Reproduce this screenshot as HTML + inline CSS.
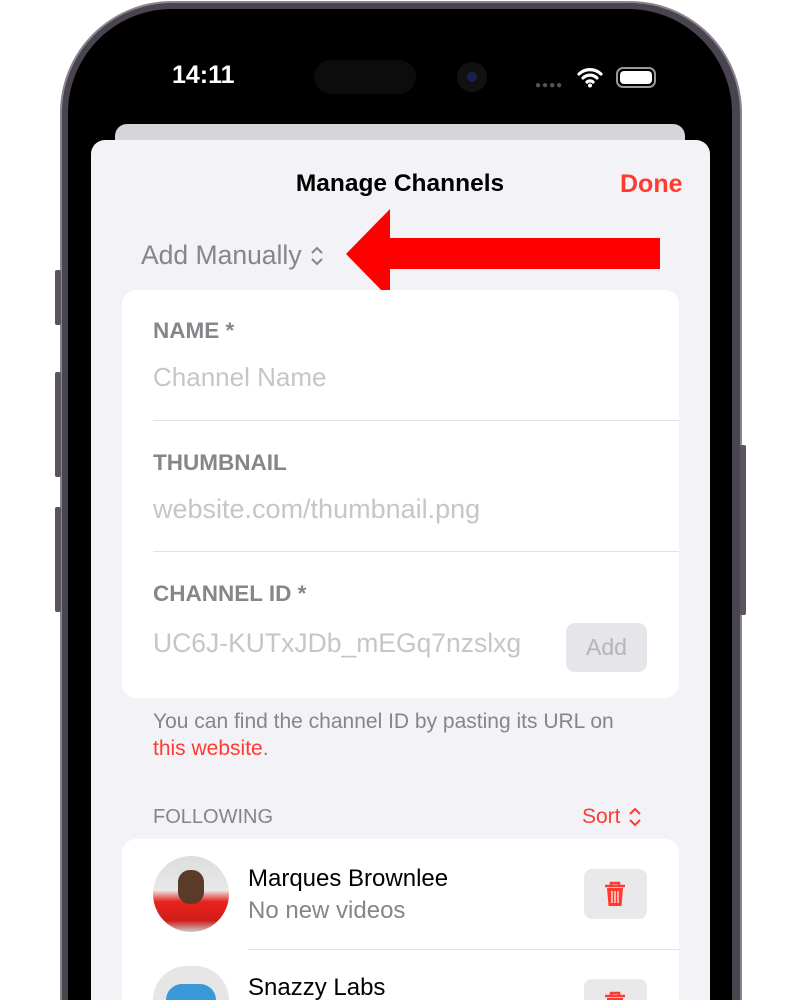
<!DOCTYPE html>
<html><head><meta charset="utf-8"><style>
*{margin:0;padding:0;box-sizing:border-box}
html,body{width:800px;height:1000px;overflow:hidden}
body{background:#fff;position:relative;font-family:"Liberation Sans",sans-serif}
.abs{position:absolute}
.frame{left:60px;top:1px;width:682px;height:999px;border-radius:112px 112px 0 0;background:#4a4450;border:2px solid #8a8390;border-bottom:none}
.screen{left:68px;top:9px;width:664px;height:991px;border-radius:104px 104px 0 0;background:#000}
.btn{background:#5a5360;width:6px;border-radius:2px}
.sheet{left:91px;top:140px;width:619px;height:860px;background:#f2f2f7;border-radius:14px 14px 0 0}
.back{left:115px;top:124px;width:570px;height:40px;background:#d5d5da;border-radius:12px}
.card{background:#fff;border-radius:14px}
.lbl{font-size:22.5px;color:#85858a;font-weight:bold}
.ph{color:#c6c6c9}
.sep{height:1px;background:#e2e2e6}
.clip{left:0;top:0;width:800px;height:1000px;overflow:hidden}
</style></head><body>
<div class="abs frame"></div>
<div class="abs btn" style="left:55px;top:270px;height:55px"></div>
<div class="abs btn" style="left:55px;top:372px;height:105px"></div>
<div class="abs btn" style="left:55px;top:507px;height:105px"></div>
<div class="abs btn" style="left:740px;top:445px;height:170px"></div>
<div class="abs screen"></div>
<div class="abs" style="left:172px;top:61px;color:#fff;font-size:25px;font-weight:bold">14:11</div>
<div class="abs" style="left:314px;top:60px;width:102px;height:34px;border-radius:17px;background:#0c0c0c"></div>
<div class="abs" style="left:457px;top:62px;width:30px;height:30px;border-radius:15px;background:#111"><div style="margin:10px;width:10px;height:10px;border-radius:5px;background:#1a2150"></div></div>
<div class="abs" style="left:535px;top:80px;color:#555;font-size:10px;letter-spacing:1px">●●●●</div>
<svg class="abs" style="left:577px;top:66px" width="26" height="22" viewBox="0 0 26 22"><path d="M2 8a16 16 0 0 1 22 0M6 12a10 10 0 0 1 14 0M10 16a4.5 4.5 0 0 1 6 0" stroke="#fff" stroke-width="3.2" fill="none" stroke-linecap="round"/><circle cx="13" cy="19.5" r="2" fill="#fff"/></svg>
<div class="abs" style="left:616px;top:67px;width:40px;height:21px;border:2px solid #999;border-radius:7px;padding:2px"><div style="width:100%;height:100%;background:#fff;border-radius:4px"></div></div>
<div class="abs back"></div>
<div class="abs sheet"></div>
<div class="abs" style="left:0;width:800px;top:170px;text-align:center;font-size:24.5px;font-weight:bold;color:#000">Manage Channels</div>
<div class="abs" style="left:620px;top:170px;font-size:25px;font-weight:bold;color:#ff3b30">Done</div>
<div class="abs" style="left:141px;top:240px;font-size:26.5px;color:#85858a">Add Manually</div>
<svg class="abs" style="left:309px;top:245px" width="16" height="22"><path d="M3 8l5-5 5 5M3 14l5 5 5-5" stroke="#85858a" stroke-width="2" fill="none"/></svg>
<svg class="abs" style="left:340px;top:205px" width="325" height="95"><polygon points="6,49 50,4 50,33 320,33 320,64 50,64 50,94" fill="#ff0000"/></svg>
<div class="abs card" style="left:122px;top:290px;width:557px;height:408px"></div>
<div class="abs lbl" style="left:153px;top:318px">NAME *</div>
<div class="abs ph" style="left:153px;top:362px;font-size:26px">Channel Name</div>
<div class="abs sep" style="left:153px;top:420px;width:526px"></div>
<div class="abs lbl" style="left:153px;top:450px">THUMBNAIL</div>
<div class="abs ph" style="left:153px;top:494px;font-size:27px">website.com/thumbnail.png</div>
<div class="abs sep" style="left:153px;top:551px;width:526px"></div>
<div class="abs lbl" style="left:153px;top:581px">CHANNEL ID *</div>
<div class="abs ph" style="left:153px;top:628px;font-size:26.5px">UC6J-KUTxJDb_mEGq7nzslxg</div>
<div class="abs" style="left:566px;top:623px;width:81px;height:49px;background:#e5e5ea;border-radius:9px;color:#b5b5b9;font-size:23px;text-align:center;line-height:49px">Add</div>
<div class="abs" style="left:153px;top:708px;font-size:21px;color:#85858a;line-height:27px;white-space:nowrap">You can find the channel ID by pasting its URL on<br><span style="color:#ff3b30">this website</span>.</div>
<div class="abs" style="left:153px;top:806px;font-size:20px;color:#85858a">FOLLOWING</div>
<div class="abs" style="left:582px;top:805px;font-size:21px;color:#ff3b30">Sort</div>
<svg class="abs" style="left:627px;top:806px" width="16" height="22"><path d="M3 8l5-5 5 5M3 14l5 5 5-5" stroke="#ff3b30" stroke-width="2" fill="none"/></svg>
<div class="abs card" style="left:122px;top:839px;width:557px;height:161px;border-radius:14px 14px 0 0"></div>
<div class="abs" style="left:153px;top:856px;width:76px;height:76px;border-radius:38px;background:linear-gradient(#ddd 0%,#e8e8e8 45%,#e8231e 60%,#d01d1a 85%,#ccc 100%);overflow:hidden"><div style="margin:14px auto 0;width:26px;height:34px;border-radius:12px;background:#5a3a28"></div></div>
<div class="abs" style="left:248px;top:865px;font-size:24px;color:#000">Marques Brownlee</div>
<div class="abs" style="left:248px;top:897px;font-size:24px;color:#85858a">No new videos</div>
<div class="abs" style="left:584px;top:869px;width:63px;height:50px;background:#e9e9ec;border-radius:8px"></div>
<svg class="abs" style="left:603px;top:881px" width="24" height="26" viewBox="0 0 24 26"><path d="M2 5h20M8 5V2h8v3" stroke="#ff3b30" stroke-width="2.5" fill="none"/><path d="M4 7h16l-1.5 18h-13z" fill="#ff3b30"/><path d="M9 10v12M12 10v12M15 10v12" stroke="#fff" stroke-width="1.2"/></svg>
<div class="abs sep" style="left:248px;top:949px;width:431px"></div>
<div class="abs" style="left:153px;top:966px;width:76px;height:34px;border-radius:38px 38px 0 0;background:#e6e6e6;overflow:hidden"><div style="margin:18px auto 0;width:50px;height:16px;background:#3a9ad8;border-radius:20px 20px 0 0"></div></div>
<div class="abs" style="left:248px;top:975px;font-size:24px;line-height:25px;height:25px;color:#000">Snazzy Labs</div>
<div class="abs" style="left:584px;top:979px;width:63px;height:21px;background:#e9e9ec;border-radius:8px 8px 0 0"></div>
<svg class="abs" style="left:603px;top:991px" width="24" height="9" viewBox="0 0 24 9"><path d="M2 5h20M8 5V2h8v3" stroke="#ff3b30" stroke-width="2.5" fill="none"/><path d="M4 7h16v2h-16z" fill="#ff3b30"/></svg>
</body></html>
